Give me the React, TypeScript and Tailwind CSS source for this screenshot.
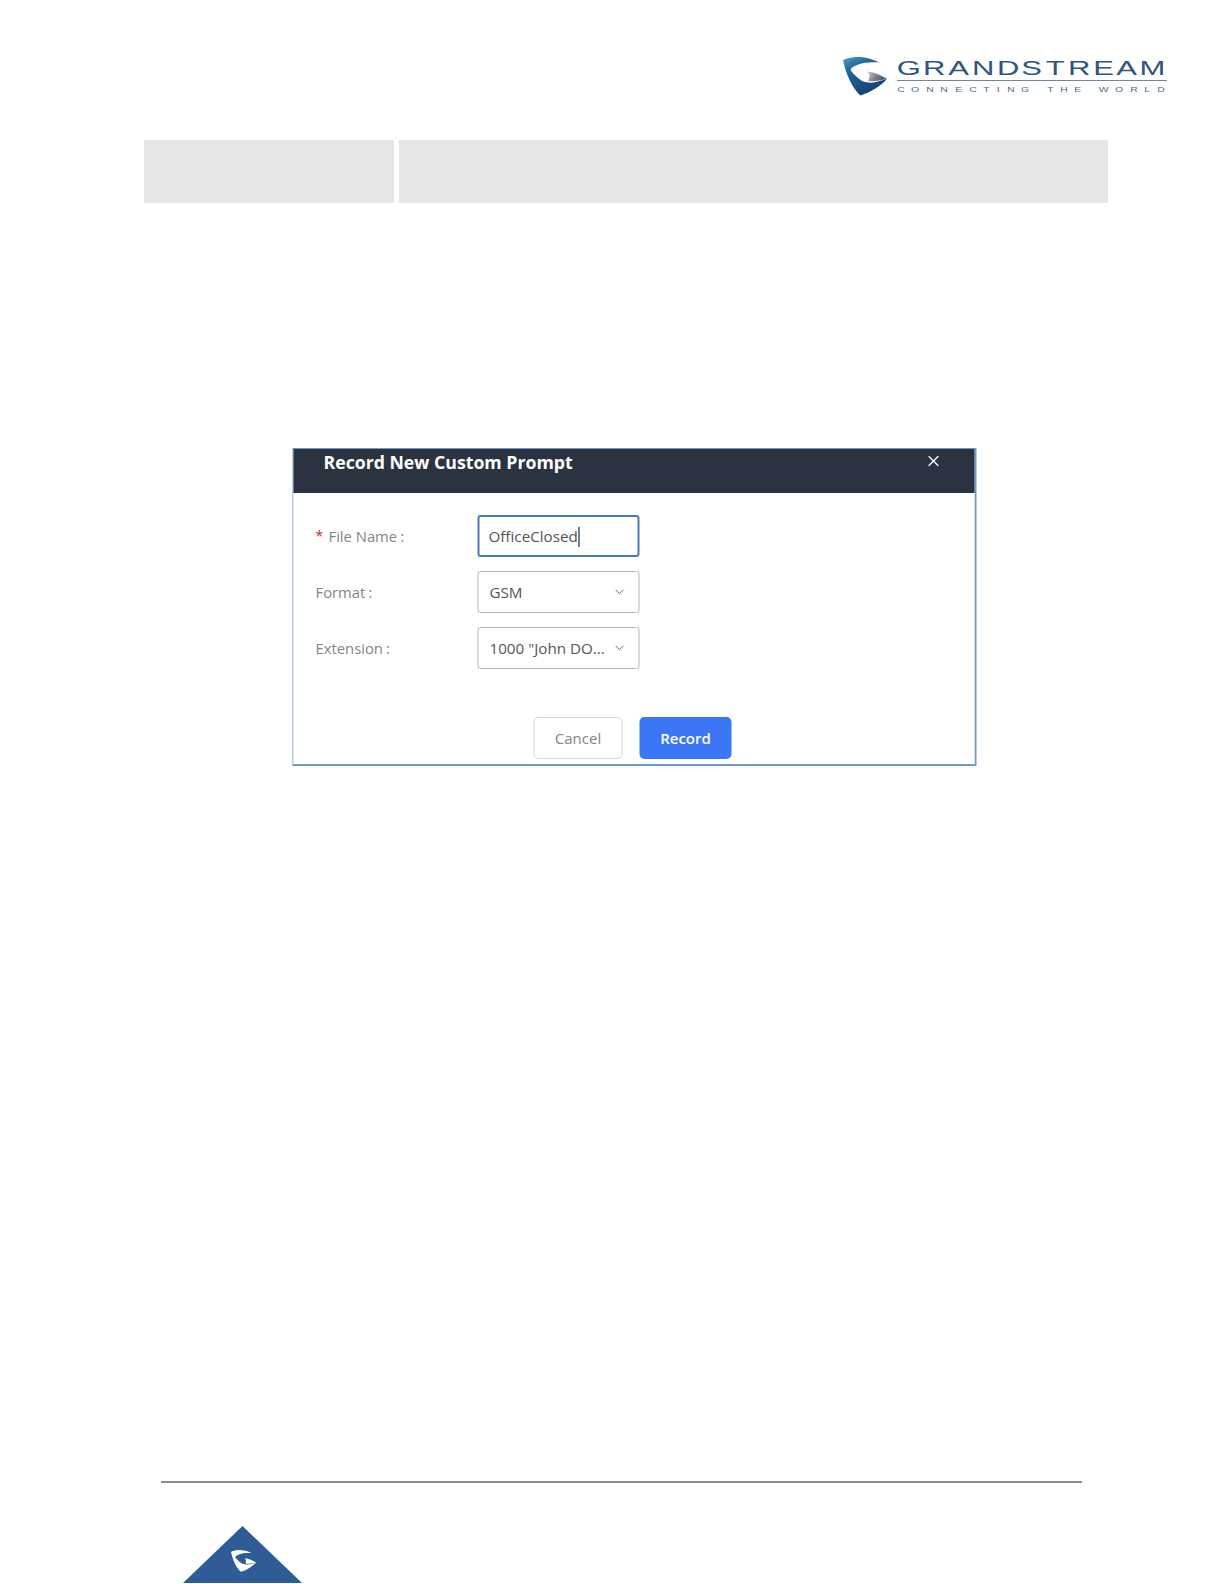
import { ChevronDown, X } from 'lucide-react';

function Shield({ className, mono }: { className?: string; mono?: boolean }) {
  return (
    <svg className={className} viewBox="0 0 44 39">
      <defs>
        <linearGradient id="shieldBlue" x1="0" y1="0" x2="0.6" y2="1">
          <stop offset="0" stopColor="#4fa3c4" />
          <stop offset="0.3" stopColor="#22689a" />
          <stop offset="1" stopColor="#163f6e" />
        </linearGradient>
        <linearGradient id="shieldGray" x1="0" y1="0" x2="1" y2="0.3">
          <stop offset="0" stopColor="#d4d6d8" />
          <stop offset="0.55" stopColor="#7b7f84" />
          <stop offset="1" stopColor="#3f5f80" />
        </linearGradient>
      </defs>
      <path
        d="M0 3C5 1 10 0 14 0C22 0 30 2 36 5.5C28 5 20 5.5 14 8C10 9.5 8 11 7.5 13C11 18 15 21 19 24C25 26 29 26 33 25L44 22C38 29 28 35 17.5 38.5C9 31 3 17 0 3Z"
        fill={mono ? '#ffffff' : 'url(#shieldBlue)'}
      />
      <path d="M24 14.5C31 15 38 18 44 22C38 23 31 25 25 24C27 21 27 17 24 14.5Z" fill={mono ? '#ffffff' : 'url(#shieldGray)'} />
    </svg>
  );
}

function Logo() {
  return (
    <div className="flex justify-end pr-[57px] pt-[57px] h-[140px]">
      <div className="flex gap-[10px] items-start">
        <Shield className="w-[44px] h-[39px]" />
        <div className="w-[270px] font-['Liberation_Sans',sans-serif] text-[#2f5580]">
          <div className="flex justify-between text-[20px] leading-[18px] mt-[2px] pl-[4px] pr-[6px]">
            {'GRANDSTREAM'.split('').map((c, i) => (
              <span key={i} className="inline-block scale-x-[1.55]">{c}</span>
            ))}
          </div>
          <div className="h-px bg-[#6f86a0] mt-[3px]" />
          <div className="flex justify-between text-[8px] leading-[8px] mt-[5px] text-[#4a6a8c] pl-[1px] pr-[3px]">
            {'CONNECTING THE WORLD'.split('').map((c, i) => (
              <span key={i} className="inline-block scale-x-[1.3]">{c === ' ' ? '\u00a0' : c}</span>
            ))}
          </div>
        </div>
      </div>
    </div>
  );
}

function Field({ label, required, children }: { label: string; required?: boolean; children: React.ReactNode }) {
  return (
    <div className="flex items-center h-[42px]">
      <div className="w-[162px] flex items-center text-[14.8px] text-[#858585]">
        {required && <span className="w-[13px] text-[#e0232e] text-[14px] leading-none">*</span>}
        <span>{label}</span>
        <span className="ml-[3px]">:</span>
      </div>
      {children}
    </div>
  );
}

function Select({ value }: { value: string }) {
  return (
    <div className="w-[162px] h-[42px] border border-[#b5b5b5] rounded-[3px] pl-[11px] pr-[12px] pt-[1px] flex items-center justify-between text-[15.2px] text-[#555]">
      <span>{value}</span>
      <ChevronDown size={14} color="#666" strokeWidth={1.7} className="-mt-[2px]" />
    </div>
  );
}

function Dialog() {
  return (
    <div className="w-[684px] h-[318px] mx-auto border-2 border-l-[1px] border-t-[1px] border-[#6b9cc9] translate-x-[22.5px] flex flex-col">
      <div className="h-[44px] bg-[#2c3340] flex justify-between pl-[30px] pr-[32px] text-white">
        <span className="text-[17.7px] font-bold leading-[26px]">Record New Custom Prompt</span>
        <X size={18} strokeWidth={1.7} className="mt-[3px]" />
      </div>
      <div className="flex-1 bg-white pl-[22px] pt-[22px] flex flex-col gap-[14px]">
        <Field label="File Name" required>
          <div className="w-[162px] h-[42px] border-2 border-[#4a78bd] rounded-[3px] pl-[9px] pt-[1px] flex items-center text-[15.2px] text-[#555]">
            OfficeClosed
            <span className="w-px h-[20px] bg-black ml-px" />
          </div>
        </Field>
        <Field label="Format">
          <Select value="GSM" />
        </Field>
        <Field label="Extension">
          <Select value={'1000 "John DO...'} />
        </Field>
        <div className="flex gap-[17px] pl-[218px] mt-[34px]">
          <div className="w-[89px] h-[42px] border border-[#d4d4d4] rounded-[5px] flex items-center justify-center text-[15px] text-[#858585]">
            Cancel
          </div>
          <div className="w-[92px] h-[42px] bg-[#3b76f6] rounded-[5px] flex items-center justify-center text-[15px] font-semibold text-white">
            Record
          </div>
        </div>
      </div>
    </div>
  );
}

export default function App() {
  return (
    <div className="w-[1224px] h-[1584px] bg-white flex flex-col overflow-hidden font-['Open_Sans',sans-serif]">
      <Logo />
      <div className="flex gap-[5px] pl-[144px] h-[63px]">
        <div className="w-[250px] bg-[#e6e6e6]" />
        <div className="w-[709px] bg-[#e6e6e6]" />
      </div>
      <div className="mt-[245px]">
        <Dialog />
      </div>
      <div className="mt-[715px] ml-[161px] w-[921px] h-[2px] bg-[#8c8c8c]" />
      <div className="ml-[183px] mt-[43px] relative w-[119px] h-[57px]">
        <svg className="w-[119px] h-[57px]" viewBox="0 0 119 57">
          <path d="M59.5 0L119 57H0Z" fill="#2f5c96" />
        </svg>
        <Shield mono className="absolute left-[48px] top-[22px] w-[25px] h-[26px]" />
      </div>
    </div>
  );
}
